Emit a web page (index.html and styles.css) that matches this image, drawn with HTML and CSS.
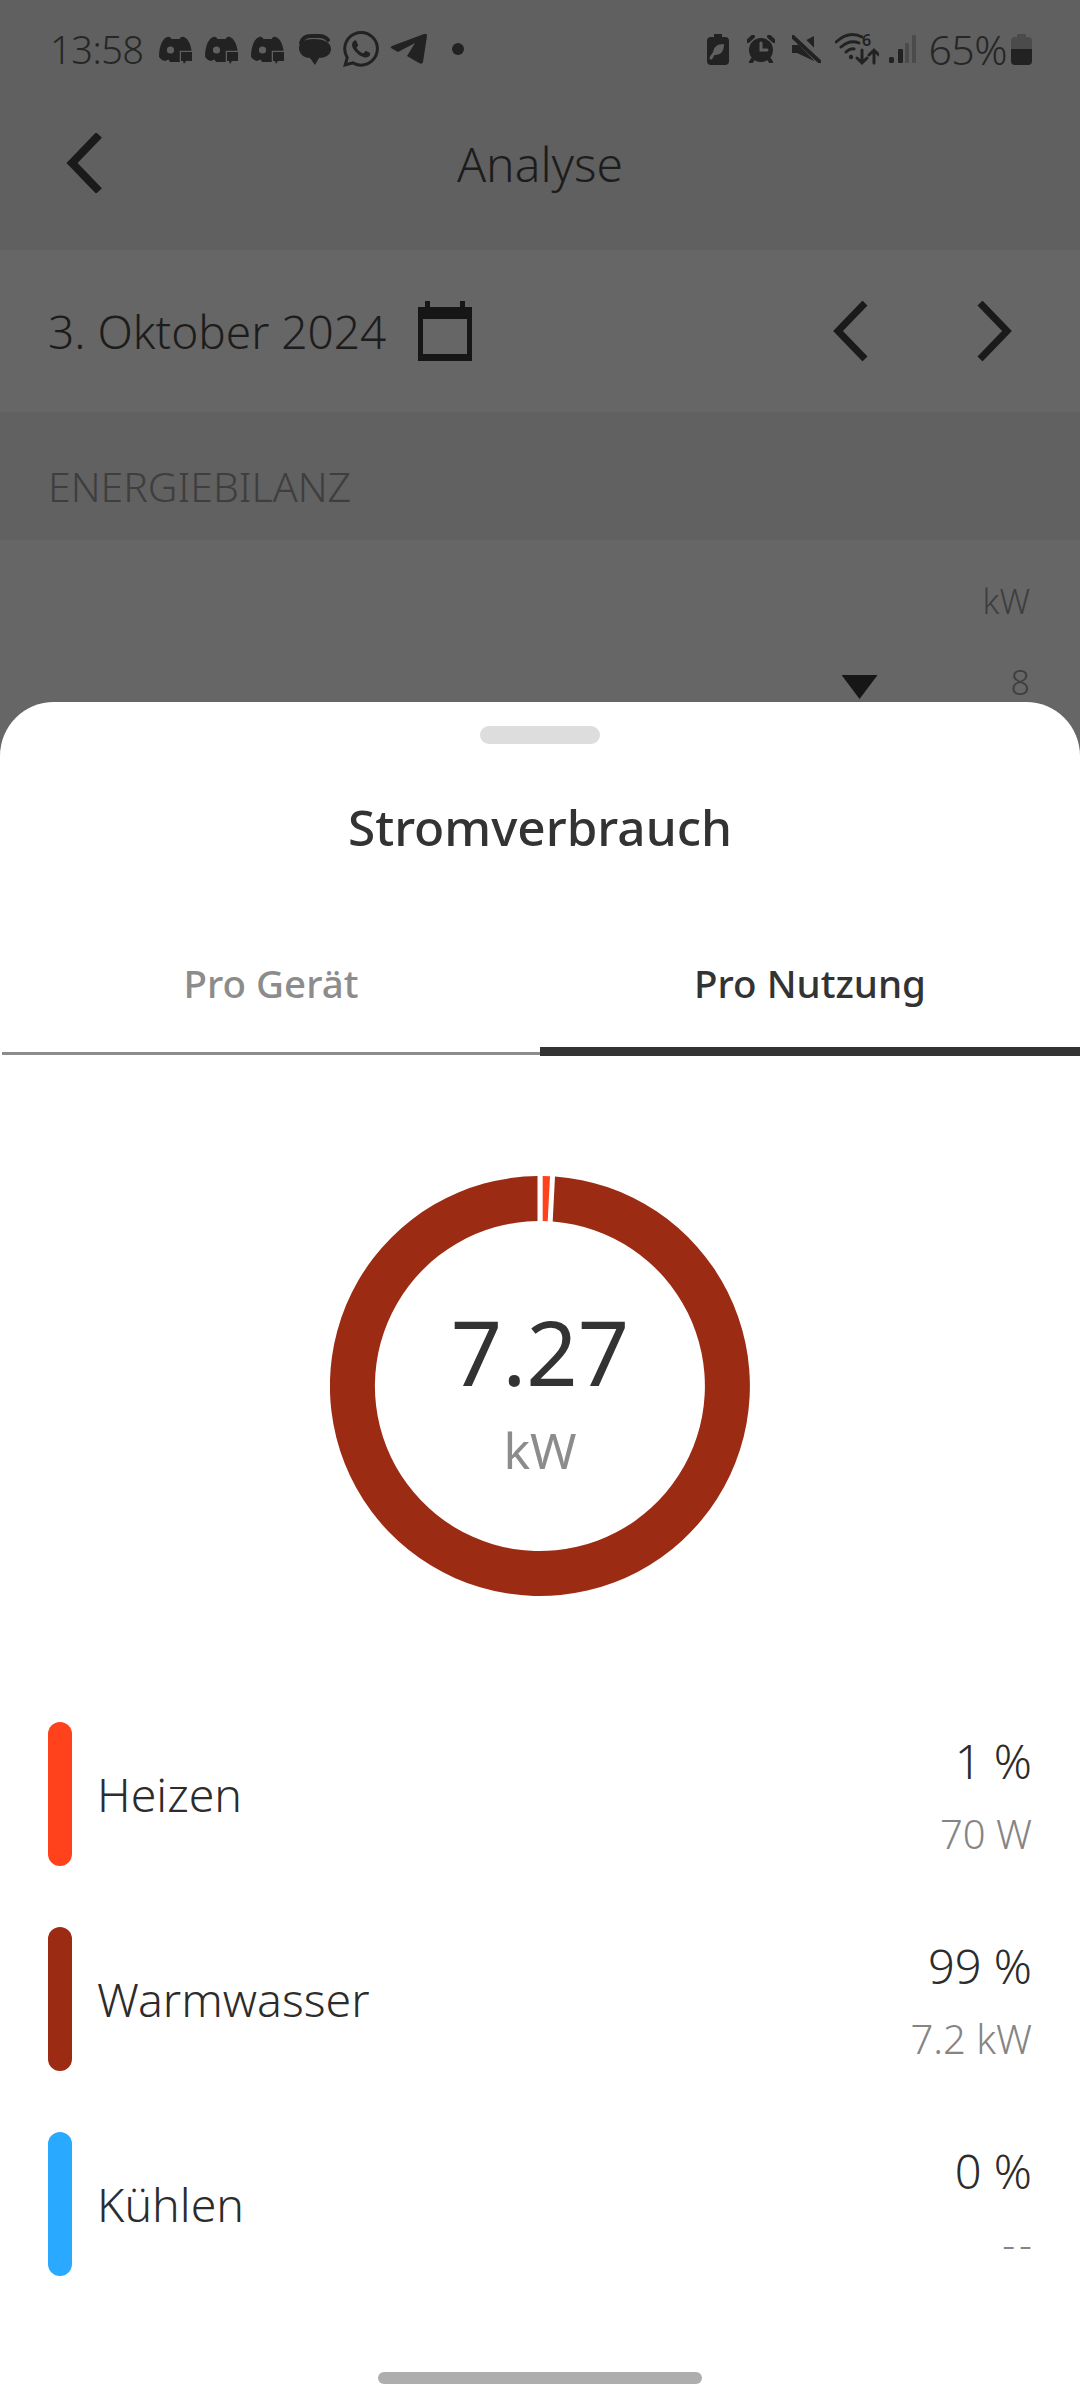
FILE: index.html
```html
<!DOCTYPE html>
<html lang="de">
<head>
<meta charset="utf-8">
<title>Analyse – Stromverbrauch</title>
<link rel="stylesheet" href="styles.css">
</head>
<body>
<div class="screen">
  <!-- Dimmed analysis page behind the bottom sheet -->
  <div class="behind">
    <div class="statusbar">
      <div class="status-left">
        <span class="clock">13:58</span>
        <div class="notif-icons">
          <svg class="ic-discord" viewBox="0 0 34 28"><use href="#discord"/></svg>
          <svg class="ic-discord" viewBox="0 0 34 28"><use href="#discord"/></svg>
          <svg class="ic-discord" viewBox="0 0 34 28"><use href="#discord"/></svg>
          <svg class="ic-chat" viewBox="0 0 33 31">
            <path class="ink-line" d="M3 9Q5 2 13 2H21Q27 2 30 6"/>
            <path class="ink" d="M1 14C1 8 7 5 16 5S33 8 33 15C33 21 27 24 21 24L17 31L12 24C6 24 1 20 1 14Z"/>
          </svg>
          <svg class="ic-whatsapp" viewBox="0 0 24 24"><path class="ink" d="M17.472 14.382c-.297-.149-1.758-.867-2.03-.967-.273-.099-.471-.148-.67.15-.197.297-.767.966-.94 1.164-.173.199-.347.223-.644.075-.297-.15-1.255-.463-2.39-1.475-.883-.788-1.48-1.761-1.653-2.059-.173-.297-.018-.458.13-.606.134-.133.298-.347.446-.52.149-.174.198-.298.298-.497.099-.198.05-.371-.025-.52-.075-.149-.669-1.612-.916-2.207-.242-.579-.487-.5-.669-.51-.173-.008-.371-.01-.57-.01-.198 0-.52.074-.792.372-.272.297-1.04 1.016-1.04 2.479 0 1.462 1.065 2.875 1.213 3.074.149.198 2.096 3.2 5.077 4.487.709.306 1.262.489 1.694.625.712.227 1.36.195 1.871.118.571-.085 1.758-.719 2.006-1.413.248-.694.248-1.289.173-1.413-.074-.124-.272-.198-.57-.347m-5.421 7.403h-.004a9.87 9.87 0 01-5.031-1.378l-.361-.214-3.741.982.998-3.648-.235-.374a9.86 9.86 0 01-1.51-5.26c.001-5.45 4.436-9.884 9.888-9.884 2.64 0 5.122 1.03 6.988 2.898a9.825 9.825 0 012.893 6.994c-.003 5.45-4.437 9.884-9.885 9.884m8.413-18.297A11.815 11.815 0 0012.05 0C5.495 0 .16 5.335.157 11.892c0 2.096.547 4.142 1.588 5.945L.057 24l6.305-1.654a11.882 11.882 0 005.683 1.448h.005c6.554 0 11.89-5.335 11.893-11.893a11.821 11.821 0 00-3.48-8.413z"/></svg>
          <svg class="ic-telegram" viewBox="0 0 37 32"><path class="ink" d="M1 15Q0 14 2 13L34 1Q37 0 37 3L33 29Q32 32 29 30L17 23L25 10L8 19Z"/></svg>
          <span class="more-dot"></span>
        </div>
      </div>
      <div class="status-right">
        <svg class="ic-ecobatt" viewBox="0 0 22 31">
          <path class="ink" d="M7 0H15V3H18Q22 3 22 7V27Q22 31 18 31H4Q0 31 0 27V7Q0 3 4 3H7Z"/>
          <path class="gap-fill" d="M6 20C6 13 10 10 17 10C17 17 14 21 8 21L7 21Z"/>
          <path class="gap-line" d="M4 24Q7 18 12 15"/>
        </svg>
        <svg class="ic-alarm" viewBox="0 0 28 28">
          <circle class="ink" cx="14" cy="15" r="12"/>
          <path class="ink-line" d="M1 6L6 1.500M27 6L22 1.500M6 24L4 27M22 24L24 27"/>
          <path class="gap-line" d="M14 8V15H20"/>
        </svg>
        <svg class="ic-mute" viewBox="0 0 29 28">
          <path class="ink" d="M0 10H5L22 1V26L5 18H0Z"/>
          <path class="mute-gap" d="M2 -1L29 26"/>
          <path class="ink-line" d="M1 2L28 27"/>
        </svg>
        <svg class="ic-wifi" viewBox="0 -4 44 38">
          <path class="ink-line thin" d="M1 10Q14 -2 27 5M6 15Q15 7 24 11M11 20Q15 16 19 17"/>
          <circle class="ink" cx="16" cy="25" r="2.200"/>
          <text class="wifi-six" x="27" y="14">6</text>
          <path class="ink-line thin" d="M27 18V31M22 26L27 31L32 26M39 31V18M34 23L39 18L44 23"/>
        </svg>
        <svg class="ic-signal" viewBox="0 0 27 28">
          <rect class="ink" x="0" y="22" width="5" height="6" rx="1.500"/>
          <rect class="ink" x="9" y="14" width="5" height="14" rx="1"/>
          <rect class="ink-faint" x="16" y="8" width="4" height="20" rx="1"/>
          <rect class="ink-faint" x="23" y="0" width="4" height="28" rx="1"/>
        </svg>
        <span class="battery-pct">65%</span>
        <svg class="ic-battery" viewBox="0 0 21 31">
          <path class="ink-faint" d="M6 0H15V3H17Q21 3 21 7V16H0V7Q0 3 4 3H6Z"/>
          <path class="ink" d="M0 15H21V27Q21 31 17 31H4Q0 31 0 27Z"/>
        </svg>
      </div>
    </div>

    <header class="appbar">
      <svg class="chev-back" viewBox="0 0 36 60"><path d="M33 2L6 30L33 58"/></svg>
      <h1 class="appbar-title">Analyse</h1>
    </header>

    <div class="datebar">
      <span class="date-text">3. Oktober 2024</span>
      <svg class="ic-calendar" viewBox="0 0 54 60">
        <path class="ink-dark" d="M7 0H12V6H42V0H47V6H54V60H0V6H7Z"/>
        <rect class="cal-face" x="5" y="18" width="44" height="35"/>
      </svg>
      <div class="date-nav">
        <svg class="chev-date" viewBox="0 0 36 60"><path d="M32 2L5 30L32 58"/></svg>
        <svg class="chev-date" viewBox="0 0 36 60"><path d="M4 2L31 30L4 58"/></svg>
      </div>
    </div>

    <div class="section-head">ENERGIEBILANZ</div>

    <div class="chart-peek">
      <div class="axis-row axis-unit">kW</div>
      <div class="axis-row axis-first">
        <span class="marker"></span>
        <span>8</span>
      </div>
    </div>
  </div>

  <!-- Bottom sheet with the consumption breakdown -->
  <section class="sheet">
    <div class="grabber"></div>
    <h2 class="sheet-title">Stromverbrauch</h2>

    <div class="tabs">
      <div class="tab">Pro Gerät</div>
      <div class="tab tab-active">Pro Nutzung</div>
    </div>

    <div class="donut">
      <svg class="donut-ring" viewBox="0 0 420 420">
        <path class="seg-water" d="M225 .54A210 210 0 1 1 207.500 .01L207.500 45.020A165 165 0 1 0 222.700 45.500Z"/>
        <path class="seg-heat" d="M212.700 .02L220 .24L217.700 45.200L212.700 45.100Z"/>
      </svg>
      <div class="donut-center">
        <div class="donut-value">7.27</div>
        <div class="donut-unit">kW</div>
      </div>
    </div>

    <div class="legend">
      <div class="legend-row">
        <span class="swatch swatch-heat"></span>
        <span class="legend-name">Heizen</span>
        <div class="legend-nums">
          <div class="legend-pct">1 %</div>
          <div class="legend-abs">70 W</div>
        </div>
      </div>
      <div class="legend-row">
        <span class="swatch swatch-water"></span>
        <span class="legend-name">Warmwasser</span>
        <div class="legend-nums">
          <div class="legend-pct">99 %</div>
          <div class="legend-abs">7.2 kW</div>
        </div>
      </div>
      <div class="legend-row">
        <span class="swatch swatch-cool"></span>
        <span class="legend-name">Kühlen</span>
        <div class="legend-nums">
          <div class="legend-pct">0 %</div>
          <div class="legend-abs legend-empty">--</div>
        </div>
      </div>
    </div>

    <div class="home-bar"></div>
  </section>
</div>

<!-- Shared notification glyph -->
<svg class="defs" width="0" height="0">
  <defs>
    <g id="discord">
      <path class="ink" d="M8 1Q11 0 12.500 3H20.500Q22 0 25 1Q28 2 30 6Q33 12 33 21L22 26H11L9.500 23.500L6 25Q2 24 0 21Q0 12 3 6Q5 2 8 1Z"/>
      <circle class="gap-fill" cx="11.500" cy="14" r="3.600"/>
      <path class="ink bubble" d="M22 16H33V25H27L25 28L24 25H22Z"/>
    </g>
  </defs>
</svg>
</body>
</html>
```

FILE: styles.css
```css
* { box-sizing: border-box; }

html, body { margin: 0; padding: 0; }

body {
  width: 1080px;
  height: 2400px;
  overflow: hidden;
  background: #666;
  font-family: "Noto Sans", "Open Sans", sans-serif;
  color: #333;
}

h1, h2 { margin: 0; font-weight: 400; }

.screen {
  display: flex;
  flex-direction: column;
  height: 2400px;
}

.defs { position: absolute; }

/* Page under the sheet, shown through the dim layer colours */
.behind {
  height: 702px;
  flex: none;
  display: flex;
  flex-direction: column;
  color: #1c1c1c;
}

.ink { fill: #222; }
.ink-dark { fill: #161616; }
.ink-faint { fill: #4b4b4b; }
.ink-line { fill: none; stroke: #222; stroke-width: 4; stroke-linecap: round; }
.ink-line.thin { stroke-width: 3; }
.gap-fill { fill: #606060; }
.gap-line { fill: none; stroke: #606060; stroke-width: 3; stroke-linecap: round; }
.mute-gap { fill: none; stroke: #606060; stroke-width: 9; }
.bubble { stroke: #606060; stroke-width: 2.500; paint-order: stroke; }

.statusbar {
  height: 100px;
  flex: none;
  background: #606060;
  display: flex;
  justify-content: space-between;
  align-items: center;
  padding: 0 48px 2px 50px;
}

.status-left, .status-right, .notif-icons { display: flex; align-items: center; }
.status-left { gap: 15px; }
.notif-icons { gap: 12px; }
.status-right { gap: 17px; }

.clock, .battery-pct {
  font-size: 38px;
  font-weight: 300;
  color: #262626;
  letter-spacing: -.5px;
}

.ic-discord { width: 34px; height: 28px; margin-top: 2px; }
.ic-chat { width: 33px; height: 31px; margin-left: 1px; }
.ic-whatsapp { width: 36px; height: 36px; }
.ic-telegram { width: 37px; height: 32px; margin-left: -1px; }
.more-dot { width: 12px; height: 12px; border-radius: 50%; background: #222; margin-left: 13px; }

.ic-ecobatt { width: 22px; height: 31px; margin-right: 1px; }
.ic-alarm { width: 28px; height: 28px; }
.ic-mute { width: 29px; height: 28px; }
.ic-wifi { width: 44px; height: 38px; margin: -4px 0 0 -3px; }
.ic-signal { width: 27px; height: 28px; margin-left: -7px; }
.battery-pct { font-size: 41px; margin-left: -5px; margin-right: -13px; }
.ic-battery { width: 21px; height: 31px; }
.wifi-six { font-family: "Noto Sans", sans-serif; font-size: 16px; font-weight: 600; fill: #222; }

.appbar {
  height: 150px;
  flex: none;
  background: #606060;
  display: grid;
  align-items: center;
  padding-bottom: 24px;
}
.appbar > * { grid-area: 1 / 1; }

.chev-back { width: 36px; height: 60px; margin-left: 66px; fill: none; stroke: #1a1a1a; stroke-width: 8; }
.appbar-title { font-size: 48px; font-weight: 300; text-align: center; color: #1c1c1c; }

.datebar {
  height: 162px;
  flex: none;
  background: #666;
  display: flex;
  align-items: center;
  padding: 0 68px 0 48px;
}
.date-text { font-size: 46px; font-weight: 300; }
.ic-calendar { width: 54px; height: 60px; margin-left: 32px; }
.cal-face { fill: #666; }
.date-nav { margin-left: auto; display: flex; gap: 107px; }
.chev-date { width: 36px; height: 60px; fill: none; stroke: #1a1a1a; stroke-width: 7; }

.section-head {
  height: 128px;
  flex: none;
  background: #616161;
  display: flex;
  align-items: center;
  padding: 19px 0 0 48px;
  font-size: 41px;
  font-weight: 300;
  color: #3e3e3e;
}

.chart-peek {
  height: 312px;
  flex: none;
  background: #666;
  padding: 38px 50px 0 0;
  font-size: 34px;
  font-weight: 300;
  color: #3e3e3e;
}
.axis-row { display: flex; justify-content: flex-end; align-items: center; }
.axis-first { margin-top: 38px; gap: 133px; line-height: 40px; }
.marker {
  width: 36px;
  height: 24px;
  background: #161616;
  clip-path: polygon(0 0, 100% 0, 50% 100%);
  margin-top: 10px;
}

/* Bottom sheet */
.sheet {
  flex: 1;
  background: #fff;
  border-radius: 54px 54px 0 0;
  display: flex;
  flex-direction: column;
  align-items: center;
}

.grabber {
  width: 120px;
  height: 18px;
  margin-top: 24px;
  border-radius: 9px;
  background: #ddd;
}

.sheet-title {
  margin-top: 49px;
  font-size: 49.5px;
  line-height: 68px;
  font-weight: 500;
  color: #333;
}

.tabs {
  width: 100%;
  margin-top: 86px;
  padding-left: 2px;
  display: grid;
  grid-template-columns: 538px 540px;
  align-items: end;
}
.tab {
  height: 100px;
  padding-bottom: 41px;
  display: flex;
  align-items: center;
  justify-content: center;
  font-size: 38.500px;
  font-weight: 500;
  color: #8c8c8c;
  border-bottom: 3px solid #8c8c8c;
  margin-bottom: 1px;
}
.tab-active {
  height: 109px;
  color: #333;
  border-bottom: 9px solid #333;
  margin-bottom: 0;
  padding-bottom: 29px;
}

.donut {
  width: 420px;
  height: 420px;
  margin-top: 120px;
  display: grid;
  place-items: center;
}
.donut > * { grid-area: 1 / 1; }
.donut-ring { width: 420px; height: 420px; }
.seg-water { fill: #9c2b14; }
.seg-heat { fill: #ff411c; }
.donut-center { text-align: center; margin-top: 4px; }
.donut-value { font-size: 90px; line-height: 110px; font-weight: 400; color: #333; }
.donut-unit { margin-top: 14px; font-size: 50px; line-height: 60px; font-weight: 400; color: #8c8c8c; }

.legend {
  width: 100%;
  margin-top: 126px;
  padding: 0 48px;
  display: flex;
  flex-direction: column;
  gap: 61px;
}
.legend-row { display: flex; align-items: center; height: 144px; }
.swatch { width: 24px; height: 144px; border-radius: 12px; }
.swatch-heat { background: #ff411c; }
.swatch-water { background: #9c2b14; }
.swatch-cool { background: #29a9ff; }
.legend-name { margin-left: 25px; font-size: 46.500px; font-weight: 300; color: #2c2c2c; }
.legend-nums { margin-left: auto; padding-top: 6px; text-align: right; }
.legend-pct { font-size: 47px; line-height: 70px; font-weight: 300; color: #2c2c2c; }
.legend-abs { margin-top: 3px; font-size: 40px; line-height: 70px; font-weight: 300; color: #858585; }
.legend-empty { letter-spacing: 4px; margin-right: -4px; }

.home-bar {
  width: 324px;
  height: 12px;
  margin-top: auto;
  margin-bottom: 16px;
  border-radius: 6px;
  background: #aeaeae;
}
```
